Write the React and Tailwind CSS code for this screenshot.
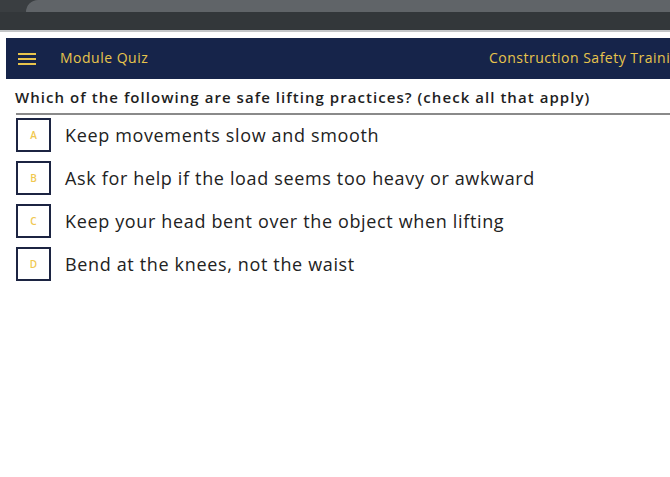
import React from "react";

const options = [
  { letter: "A", text: "Keep movements slow and smooth" },
  { letter: "B", text: "Ask for help if the load seems too heavy or awkward" },
  { letter: "C", text: "Keep your head bent over the object when lifting" },
  { letter: "D", text: "Bend at the knees, not the waist" },
];

const App = () => {
  return (
    <div className="w-[670px] h-[477px] overflow-hidden bg-white" style={{ fontFamily: "'Open Sans', sans-serif" }}>
      {/* browser chrome */}
      <div className="flex h-[12px] bg-[#3a3e41]">
        <div className="w-[26px]"></div>
        <div className="flex-1 bg-[#606468] rounded-tl-[28px]"></div>
      </div>
      <div className="h-[18px] bg-[#33373a]"></div>
      <div className="h-[2px] bg-[#c4c6c8]"></div>
      <div className="h-[6px] bg-white"></div>

      {/* quiz header */}
      <div className="ml-[6px] h-[41px] bg-[#16244a] flex items-center pl-[12px] overflow-hidden">
        <div className="w-[471px] shrink-0 flex items-center gap-[24px]">
          <div className="flex flex-col gap-[3px] w-[18px]">
            <div className="h-[2px] bg-[#e8c44c]"></div>
            <div className="h-[2px] bg-[#e8c44c]"></div>
            <div className="h-[2px] bg-[#e8c44c]"></div>
          </div>
          <span className="text-[14px] tracking-[0.5px] text-[#e8c44c] leading-[18px] -mt-[1px]">Module Quiz</span>
        </div>
        <span className="text-[14px] tracking-[0.5px] text-[#e8c44c] whitespace-nowrap shrink-0 leading-[18px] -mt-[1px]">Construction Safety Training</span>
      </div>

      <div className="pl-[15px] pt-[8px]">
        <h1 className="text-[15px] font-semibold tracking-[1.05px] text-[#1e1e1e] leading-[20px] whitespace-nowrap">
          Which of the following are safe lifting practices? (check all that apply)
        </h1>
        <div className="mt-[6px] h-[2px] bg-[#8a8a8a] ml-[1px]"></div>
        <div className="flex flex-col gap-[9px] mt-[3px] pl-[1px]">
          {options.map((o) => (
            <div key={o.letter} className="flex items-center gap-[14px]">
              <div className="w-[35px] h-[34px] border-2 border-[#1c2442] flex items-center justify-center">
                <span className="text-[10px] font-semibold text-[#f0c850]">{o.letter}</span>
              </div>
              <span className="text-[18px] tracking-[0.65px] text-[#222]">{o.text}</span>
            </div>
          ))}
        </div>
      </div>
    </div>
  );
};

export default App;
